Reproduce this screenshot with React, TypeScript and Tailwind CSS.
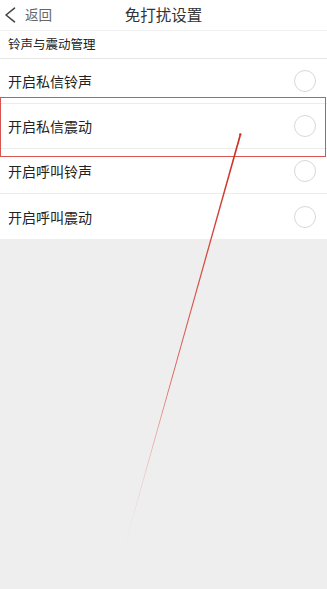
import React from "react";

const rows = ["开启私信铃声", "开启私信震动", "开启呼叫铃声", "开启呼叫震动"];

export default function App() {
  return (
    <div
      className="relative w-[327px] h-[589px] overflow-hidden bg-[#eeeeee]"
      style={{ fontFamily: '"Noto Sans CJK SC", "Noto Sans", sans-serif' }}
    >
      <div className="h-[31px] bg-white grid grid-cols-[1fr_auto_1fr] items-center border-b border-[#f0f0f0]">
        <div className="flex items-center pl-[4px]">
          <svg width="13" height="16" viewBox="0 0 13 16" className="mr-[8px]">
            <path d="M10.5 1.2 L2 8 L10.5 14.8" fill="none" stroke="#444" strokeWidth="1.6" strokeLinecap="round" strokeLinejoin="round" />
          </svg>
          <span className="text-[13.5px] text-[#666] leading-none">返回</span>
        </div>
        <div className="text-[15.5px] text-[#333] leading-none">免打扰设置</div>
        <div />
      </div>
      <div className="h-[28px] bg-white flex items-center pl-[8px] border-b border-[#e6e6e6]">
        <span className="text-[12.5px] text-[#222] leading-none">铃声与震动管理</span>
      </div>
      {rows.map((r, i) => (
        <div
          key={r}
          className={`h-[45px] bg-white flex items-center justify-between pl-[8px] pr-[11px] ${i < rows.length - 1 ? "border-b border-[#ececec]" : ""}`}
        >
          <span className="text-[14px] text-[#222] leading-none">{r}</span>
          <div className="w-[22px] h-[22px] rounded-full border-[1.5px] border-[#d8d8d8]" />
        </div>
      ))}
      <div className="absolute left-0 top-[97px] w-[326px] h-[60px] border-[1.5px] border-[#d9534f] pointer-events-none" />
      <svg className="absolute left-0 top-0 pointer-events-none" width="327" height="589" viewBox="0 0 327 589">
        <defs>
          <linearGradient id="g" x1="240" y1="134" x2="124" y2="548" gradientUnits="userSpaceOnUse">
            <stop offset="0" stopColor="#cc2a1f" stopOpacity="1" />
            <stop offset="0.6" stopColor="#d8453a" stopOpacity="0.8" />
            <stop offset="1" stopColor="#e88" stopOpacity="0" />
          </linearGradient>
        </defs>
        <polygon points="239.4,135 241,135.4 124.4,548 124,548" fill="url(#g)" />
        <circle cx="240.3" cy="134.5" r="1.2" fill="#cc2a1f" />
      </svg>
    </div>
  );
}
